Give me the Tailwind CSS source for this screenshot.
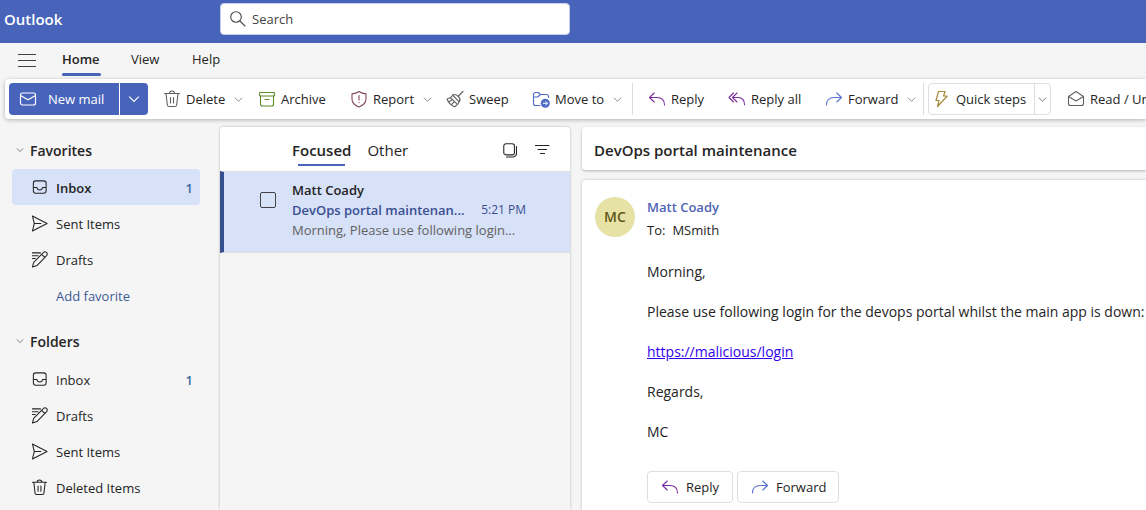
<!DOCTYPE html>
<html lang="en">
<head>
<meta charset="utf-8">
<meta name="viewport" content="width=device-width, initial-scale=1">
<title>Outlook</title>
<script src="https://cdn.jsdelivr.net/npm/@tailwindcss/browser@4"></script>
</head>
<body class="flex h-screen flex-col overflow-hidden bg-[#f5f5f5] font-['Open_Sans','Noto_Sans',sans-serif] text-[13px] leading-5 text-[#242424]">

<!-- Icon set -->
<svg class="hidden" aria-hidden="true">
  <defs>
    <symbol id="chevron" viewBox="0 0 10 10"><path d="M1 3l4 4 4-4" fill="none" stroke="currentColor"/></symbol>
    <symbol id="mail" viewBox="0 0 18 18"><g fill="none" stroke="currentColor" stroke-width="1.2"><rect x="1.5" y="3" width="15" height="12" rx="2"/><path d="M1.5 5.5L9 9.7l7.5-4.2"/></g></symbol>
    <symbol id="trash" viewBox="0 0 18 18"><g fill="none" stroke="currentColor" stroke-width="1.1" stroke-linecap="round"><path d="M1.5 3.500h15M6.500 3.500a2.500 2.500 0 0 1 5 0M3 3.500l1.300 11.500a1.800 1.800 0 0 0 1.800 1.500h5.800a1.800 1.800 0 0 0 1.800-1.500L15 3.500M7.500 7.500v5.500M10.500 7.500v5.500"/></g></symbol>
    <symbol id="archive" viewBox="0 0 18 18"><g fill="none" stroke="currentColor" stroke-width="1.1"><rect x="1.5" y="2.5" width="15" height="3.5" rx="0.8"/><path d="M2.5 6v8a2 2 0 0 0 2 2h9a2 2 0 0 0 2-2V6M7 9.500h4" stroke-linecap="round"/></g></symbol>
    <symbol id="shield" viewBox="0 0 18 18"><g fill="none" stroke="currentColor" stroke-width="1.1" stroke-linecap="round" stroke-linejoin="round"><path d="M9 1.500c2 1.500 4.200 2.200 7 2.400V9c0 3.800-2.400 6.200-7 8-4.600-1.800-7-4.200-7-8V3.900c2.800-.2 5-.9 7-2.400z"/><path d="M9 5.500v4.500M9 12.400v.2"/></g></symbol>
    <symbol id="broom" viewBox="0 0 18 18"><g fill="none" stroke="currentColor" stroke-width="1.1" stroke-linecap="round" stroke-linejoin="round"><path d="M17 1.500l-5 5M6.500 5l6.800 6.800c1.200-1.900.7-3.700-.6-5-1.600-1.600-4-3-6.200-1.800zM6.500 5.500C5.300 7.500 3.500 8.600 1 9c1.300 3.500 4.200 6.500 7.700 7.700 2.500-1.300 3.800-3 4.300-5.200M2.700 12l2.800-1.800M5.300 14.800l2.700-3M4.800 8l5.800 5.700"/></g></symbol>
    <symbol id="folder-move" viewBox="0 0 18 18"><g fill="none" stroke="currentColor" stroke-width="1.1" stroke-linejoin="round"><path d="M8.500 15.500h-5a2 2 0 0 1-2-2v-9a2 2 0 0 1 2-2h2.700L8.500 4.500h6a2 2 0 0 1 2 2V8M1.500 7h4.200L8.500 4.500"/></g><circle cx="13.300" cy="13.300" r="4.500" fill="currentColor"/><path d="M11 13.300h4.500M13.600 11.400l1.900 1.900-1.900 1.900" fill="none" stroke="#fff"/></symbol>
    <symbol id="reply" viewBox="0 0 18 18"><path d="M6.200 3L1.500 7.500 6.200 12M1.500 7.500h7.300c4.700 0 7.700 2.600 7.700 7.400" fill="none" stroke="currentColor" stroke-width="1.1" stroke-linecap="round" stroke-linejoin="round"/></symbol>
    <symbol id="reply-all" viewBox="0 0 18 18"><path d="M5.500 3L1 7.500 5.500 12M9 3L4.500 7.500 9 12M4.500 7.500H10c4.200 0 6.500 2.600 6.500 7.200" fill="none" stroke="currentColor" stroke-width="1.1" stroke-linecap="round" stroke-linejoin="round"/></symbol>
    <symbol id="forward" viewBox="0 0 18 18"><path d="M11.800 3l4.700 4.500-4.700 4.500M16.500 7.500H9.200c-4.700 0-7.700 2.600-7.700 7.400" fill="none" stroke="currentColor" stroke-width="1.1" stroke-linecap="round" stroke-linejoin="round"/></symbol>
    <symbol id="bolt" viewBox="0 0 18 18"><path d="M5.500 1.500h6.700l-1.700 4.500h3.700L4.500 16.500 6 10.500H3z" fill="none" stroke="currentColor" stroke-width="1.200" stroke-linejoin="round"/></symbol>
    <symbol id="mail-open" viewBox="0 0 18 18"><g fill="none" stroke="currentColor" stroke-width="1.1" stroke-linejoin="round"><path d="M1.500 6.500L9 1.500l7.500 5v7a2 2 0 0 1-2 2h-11a2 2 0 0 1-2-2z"/><path d="M1.500 6.500L9 11l7.500-4.500"/></g></symbol>
    <symbol id="inbox" viewBox="0 0 18 18"><g fill="none" stroke="currentColor" stroke-width="1.1"><rect x="2.500" y="2" width="13.500" height="13" rx="2.500"/><path d="M2.500 9h3.700c.3 1.700 1.300 2.700 3 2.700s2.800-1 3.100-2.700H16"/></g></symbol>
    <symbol id="send" viewBox="0 0 18 18"><g fill="none" stroke="currentColor" stroke-width="1.1" stroke-linejoin="round"><path d="M1.500 1L17 9 1.500 17l2-8z"/><path d="M3.500 9h7" stroke-linecap="round"/></g></symbol>
    <symbol id="draft" viewBox="0 0 18 18"><g fill="none" stroke="currentColor" stroke-width="1.1" stroke-linecap="round" stroke-linejoin="round"><path d="M1.500 2h8.500M1.500 5h6M1.500 8h3"/><path d="M13 1.700a2.300 2.300 0 0 1 3.500 3.200L6.300 15.400 1.500 17l1.300-4.900zM11.200 3.500l3.400 3.300"/></g></symbol>
    <symbol id="search" viewBox="0 0 18 18"><path d="M11 11l5 5M12.300 7a5.300 5.300 0 1 1-10.600 0 5.300 5.300 0 0 1 10.600 0z" fill="none" stroke="currentColor" stroke-width="1.100" stroke-linecap="round"/></symbol>
    <symbol id="select" viewBox="0 0 18 18"><g fill="none" stroke="currentColor" stroke-width="1.200"><rect x="2" y="2" width="12" height="12.500" rx="2.500"/><path d="M5 16.800h7.500a3.700 3.700 0 0 0 3.800-3.800V5" stroke-linecap="round"/></g></symbol>
    <symbol id="filter" viewBox="0 0 18 18"><path d="M2.500 4.500h13.500M5 8.500h8.500M7.500 12.500h4" fill="none" stroke="currentColor" stroke-width="1.200" stroke-linecap="round"/></symbol>
  </defs>
</svg>

<header class="flex h-[43px] shrink-0 items-center bg-[#4764ba]">
  <h1 class="w-[220px] shrink-0 pb-1.5 pl-1 text-[15px] font-semibold text-white">Outlook</h1>
  <label class="mb-[5px] flex h-8 w-[350px] items-center gap-1 rounded border border-[#c6cfe8] bg-white pl-2 text-[#484848]">
    <svg class="size-[18px] shrink-0"><use href="#search"/></svg>
    <input type="search" aria-label="Search" placeholder="Search" class="min-w-0 flex-1 bg-transparent pl-px outline-none placeholder:text-[#424242]">
  </label>
</header>

<nav class="flex h-9 shrink-0 items-center pl-[18px]" aria-label="Ribbon tabs">
  <button aria-label="Toggle navigation" class="mr-[26px] mb-0.5 flex h-[13px] w-[18px] flex-col justify-between">
    <span class="h-px w-full bg-[#424242]"></span><span class="h-px w-full bg-[#424242]"></span><span class="h-px w-full bg-[#424242]"></span>
  </button>
  <button class="relative mb-1 w-[69px] text-left font-semibold text-[#242424]">Home<span class="absolute top-6 left-0 h-[3px] w-[39px] rounded-full bg-[#4764ba]"></span></button>
  <button class="mb-1 w-[61px] text-left">View</button>
  <button class="mb-1">Help</button>
</nav>

<div class="ml-[5px] flex h-10 shrink-0 items-center rounded-l bg-white pl-1 shadow-[0_1px_4px_rgba(0,0,0,0.28)]" role="toolbar" aria-label="Mail actions">
  <div class="mr-[15px] flex h-8 shrink-0 gap-px overflow-hidden rounded text-white">
    <button class="flex w-[110px] items-center gap-[11px] bg-[#4764ba] pl-2.5 font-medium"><svg class="size-[18px]"><use href="#mail"/></svg>New mail</button>
    <button aria-label="New mail options" class="flex w-7 items-center justify-center bg-[#4764ba]"><svg class="size-3"><use href="#chevron"/></svg></button>
  </div>
  <button class="flex w-[95px] shrink-0 items-center gap-[5px]"><svg class="size-[18px] text-[#616161]"><use href="#trash"/></svg>Delete<svg class="ml-1 size-[9px] text-[#808080]"><use href="#chevron"/></svg></button>
  <button class="flex w-[92px] shrink-0 items-center gap-[5px]"><svg class="size-[18px] text-[#5f8a2a]"><use href="#archive"/></svg>Archive</button>
  <button class="flex w-24 shrink-0 items-center gap-[5px]"><svg class="size-[18px] text-[#83485c]"><use href="#shield"/></svg>Report<svg class="ml-1 size-[9px] text-[#808080]"><use href="#chevron"/></svg></button>
  <button class="flex w-[86px] shrink-0 items-center gap-[5px]"><svg class="size-[18px] text-[#616161]"><use href="#broom"/></svg>Sweep</button>
  <button class="flex w-[100px] shrink-0 items-center gap-[5px]"><svg class="size-[18px] text-[#4f6bc4]"><use href="#folder-move"/></svg>Move to<svg class="ml-1 size-[9px] text-[#808080]"><use href="#chevron"/></svg></button>
  <span class="mr-[15px] h-8 w-px shrink-0 bg-[#dcdcdc]"></span>
  <button class="flex w-20 shrink-0 items-center gap-[5px]"><svg class="size-[18px] text-[#7b2c9e]"><use href="#reply"/></svg>Reply</button>
  <button class="flex w-[97px] shrink-0 items-center gap-[5px]"><svg class="size-[18px] text-[#7b2c9e]"><use href="#reply-all"/></svg>Reply all</button>
  <button class="flex w-[98px] shrink-0 items-center gap-[5px]"><svg class="size-[18px] text-[#5b72cc]"><use href="#forward"/></svg>Forward<svg class="ml-1 size-[9px] text-[#808080]"><use href="#chevron"/></svg></button>
  <span class="mr-1 h-8 w-px shrink-0 bg-[#dcdcdc]"></span>
  <div class="mr-4 flex h-8 w-[123px] shrink-0 rounded border border-[#dedede]">
    <button class="flex flex-1 items-center gap-[5px] pl-1 whitespace-nowrap"><svg class="size-[18px] shrink-0 text-[#a58a3c]"><use href="#bolt"/></svg>Quick steps</button>
    <button aria-label="Quick steps options" class="flex w-4 items-center justify-center border-l border-[#dedede]"><svg class="size-[9px] text-[#707070]"><use href="#chevron"/></svg></button>
  </div>
  <button class="flex w-0 flex-1 items-center gap-[5px] overflow-hidden whitespace-nowrap"><svg class="size-[18px] shrink-0 text-[#616161]"><use href="#mail-open"/></svg>Read / Unread</button>
</div>

<main class="flex min-h-0 flex-1">
  <nav class="w-[220px] shrink-0 pt-[13px] pr-5 pl-3" aria-label="Folders">
    <button class="mb-px flex h-9 w-full items-center gap-1.5 pl-1 text-sm font-semibold"><svg class="size-2 text-[#616161]"><use href="#chevron"/></svg><span class="pt-0.5">Favorites</span></button>
    <ul>
      <li><a href="#" class="flex h-9 items-center gap-2 rounded bg-[#d7e1f8] pr-[7px] pl-[19px] font-semibold"><svg class="size-[17px]"><use href="#inbox"/></svg><span class="pt-0.5">Inbox</span><span class="ml-auto pt-0.5 text-[#3f6a9c]">1</span></a></li>
      <li><a href="#" class="flex h-9 items-center gap-2 pr-[7px] pl-[19px]"><svg class="size-[17px]"><use href="#send"/></svg><span class="pt-0.5">Sent Items</span></a></li>
      <li><a href="#" class="flex h-9 items-center gap-2 pr-[7px] pl-[19px]"><svg class="size-[17px]"><use href="#draft"/></svg><span class="pt-0.5">Drafts</span></a></li>
      <li><a href="#" class="flex h-9 items-center pl-11 text-[#3d5a96]"><span class="pt-0.5">Add favorite</span></a></li>
    </ul>
    <button class="mt-2.5 mb-0.5 flex h-9 w-full items-center gap-1.5 pl-1 text-sm font-semibold"><svg class="size-2 text-[#616161]"><use href="#chevron"/></svg><span class="pt-0.5">Folders</span></button>
    <ul>
      <li><a href="#" class="flex h-9 items-center gap-2 pr-[7px] pl-[19px]"><svg class="size-[17px]"><use href="#inbox"/></svg><span class="pt-0.5">Inbox</span><span class="ml-auto pt-0.5 font-semibold text-[#3f6a9c]">1</span></a></li>
      <li><a href="#" class="flex h-9 items-center gap-2 pr-[7px] pl-[19px]"><svg class="size-[17px]"><use href="#draft"/></svg><span class="pt-0.5">Drafts</span></a></li>
      <li><a href="#" class="flex h-9 items-center gap-2 pr-[7px] pl-[19px]"><svg class="size-[17px]"><use href="#send"/></svg><span class="pt-0.5">Sent Items</span></a></li>
      <li><a href="#" class="flex h-9 items-center gap-2 pr-[7px] pl-[19px]"><svg class="size-[17px]"><use href="#trash"/></svg><span class="pt-0.5">Deleted Items</span></a></li>
    </ul>
  </nav>

  <section class="mt-2 mr-3 w-[350px] shrink-0 rounded-t shadow-[0_0_3px_rgba(0,0,0,0.25)]" aria-label="Message list">
    <div class="flex h-11 items-center rounded-t bg-white pt-0.5 pr-[19px] pl-[72px] text-[15px]">
      <button class="relative mr-4 font-semibold">Focused<span class="absolute top-6 right-1.5 left-1.5 h-0.5 bg-[#4764ba]"></span></button>
      <button>Other</button>
      <button aria-label="Select" class="ml-auto"><svg class="size-4"><use href="#select"/></svg></button>
      <button aria-label="Filter" class="ml-[15px]"><svg class="size-[18px]"><use href="#filter"/></svg></button>
    </div>
    <article class="flex h-[82px] items-start border-y border-l-4 border-y-[#dcdfe6] border-l-[#344e8e] bg-[#d7e1f8] pt-2 pr-11 pl-9">
      <input type="checkbox" aria-label="Select message from Matt Coady" class="mt-3 mr-4 size-4 shrink-0 appearance-none rounded-xs border border-[#424242]">
      <div class="min-w-0 flex-1">
        <p class="font-semibold">Matt Coady</p>
        <p class="flex items-center justify-between text-[#3a4f92]"><span class="font-semibold">DevOps portal maintenan...</span><time class="text-xs leading-5 whitespace-nowrap">5:21 PM</time></p>
        <p class="whitespace-nowrap text-[#616161]">Morning, Please use following login...</p>
      </div>
    </article>
  </section>

  <section class="flex min-w-0 flex-1 flex-col gap-2.5 pt-2" aria-label="Reading pane">
    <h2 class="flex h-[43px] shrink-0 items-center rounded-l bg-white pt-0.5 pl-3 text-[15px] font-semibold shadow-[0_1px_3px_rgba(0,0,0,0.28)]">DevOps portal maintenance</h2>
    <article class="flex flex-1 items-start gap-3 rounded-tl bg-white pt-[17px] pl-[13px] shadow-[0_0_3px_rgba(0,0,0,0.25)]">
      <div class="flex size-10 shrink-0 items-center justify-center rounded-full bg-[#e6e1a5] text-sm font-semibold text-[#5e5817]">MC</div>
      <div class="min-w-0 flex-1">
        <p class="font-semibold text-[#5064b4]">Matt Coady</p>
        <p class="mt-[3px] flex gap-[7px]"><span>To:</span><span>MSmith</span></p>
        <div class="mt-[22px] flex flex-col gap-5 text-sm leading-5 whitespace-nowrap">
          <p>Morning,</p>
          <p>Please use following login for the devops portal whilst the main app is down:</p>
          <p><a href="#" class="text-[#3100ee] underline">https://malicious/login</a></p>
          <p>Regards,</p>
          <p>MC</p>
        </div>
        <div class="mt-[29px] flex gap-1">
          <button class="flex h-8 w-[86px] items-center gap-[7px] rounded border border-[#dedede] pl-[13px]"><svg class="size-[18px] text-[#7b2c9e]"><use href="#reply"/></svg>Reply</button>
          <button class="flex h-8 w-[102px] items-center gap-[7px] rounded border border-[#dedede] pl-[13px]"><svg class="size-[18px] text-[#5b72cc]"><use href="#forward"/></svg>Forward</button>
        </div>
      </div>
    </article>
  </section>
</main>
</body>
</html>
